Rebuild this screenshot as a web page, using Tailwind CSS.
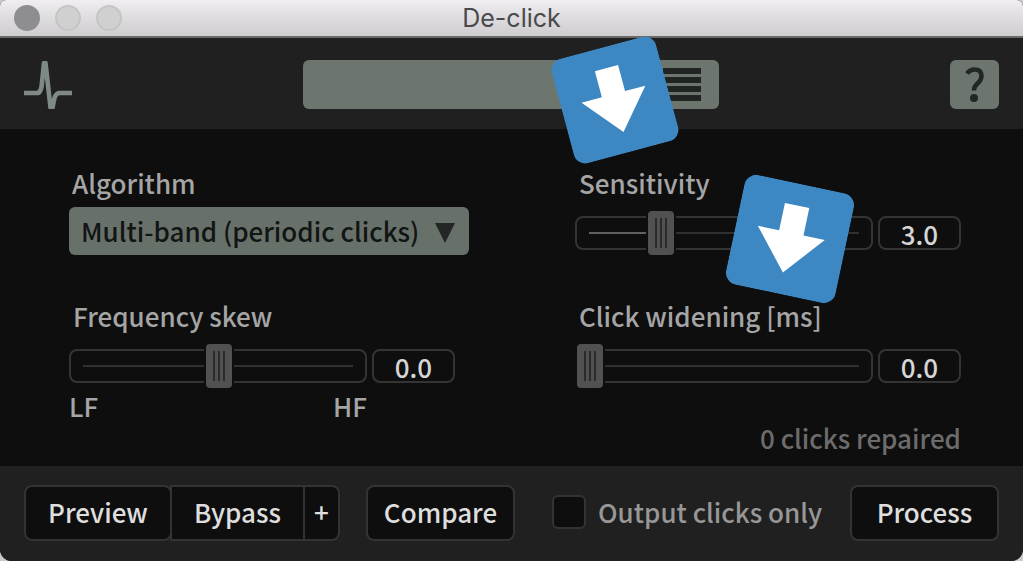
<!DOCTYPE html>
<html lang="en">
<head>
<meta charset="utf-8">
<meta name="viewport" content="width=device-width, initial-scale=1">
<title>De-click</title>
<script src="https://cdn.jsdelivr.net/npm/@tailwindcss/browser@4"></script>
</head>
<body class="min-h-screen bg-[#c9c9c9] font-['Noto_Sans_CJK_SC','Noto_Sans',sans-serif] text-[26px] font-medium">
<div class="relative flex min-h-screen flex-col overflow-hidden rounded-t-md rounded-b-xl bg-[#0e0e0e] text-[#a5a5a5]">

  <!-- Title bar -->
  <div class="relative flex h-[38px] shrink-0 items-center justify-center border-b-2 border-[#6a6a6a] bg-linear-to-b from-[#f0eef0] via-[#dedcde] to-[#cfcdcf]">
    <div class="absolute left-3.5 flex gap-[15px]">
      <button aria-label="Close" class="size-[26px] rounded-full bg-[#8e8d92]"></button>
      <button aria-label="Minimize" class="size-[26px] rounded-full border-2 border-[#c5c5c5] bg-[#d0d0d0]"></button>
      <button aria-label="Zoom" class="size-[26px] rounded-full border-2 border-[#c5c5c5] bg-[#d0d0d0]"></button>
    </div>
    <h1 class="font-[Inter,sans-serif] text-[25px] leading-9 font-normal text-[#4a494b]">De-click</h1>
  </div>

  <!-- Preset bar -->
  <header class="flex h-[91px] shrink-0 items-center justify-between bg-[#202020] px-6 pt-0.5">
    <svg class="h-12 w-12" viewBox="0 0 48 48" fill="none" stroke="#7f8a84" stroke-width="4.6" stroke-linejoin="round" aria-hidden="true"><path d="M0 32H14Q16.500 31 17.500 26L20 2H21.500L26.500 46.500H28.500L30 39Q31 33 35 32H48"/></svg>
    <div class="flex h-[49px] w-[416px] items-center justify-between rounded-md bg-[#6d756f] pr-[18px]">
      <input type="text" aria-label="Preset" class="h-full w-80 bg-transparent px-3 text-[#0e0e0e] outline-none">
      <button aria-label="Preset menu" class="flex w-[38px] flex-col gap-[3px]">
        <span class="h-1.5 w-full bg-[#202422]"></span>
        <span class="h-1.5 w-full bg-[#202422]"></span>
        <span class="h-1.5 w-full bg-[#202422]"></span>
        <span class="h-1.5 w-full bg-[#202422]"></span>
      </button>
    </div>
    <button aria-label="Help" class="flex size-[49px] items-center justify-center rounded-md bg-[#6d756f] text-[#222624]">
      <svg class="h-9 w-5" viewBox="0 0 20 36" fill="none" aria-hidden="true"><path d="M2 6.500Q5 2.500 9.500 2.500Q16.500 2.500 16.500 9Q16.500 13 12.500 16.500Q9 19.500 9 23.500" stroke="currentColor" stroke-width="4.500"/><circle cx="9" cy="31" r="4" fill="currentColor"/></svg>
    </button>
  </header>

  <!-- Parameters -->
  <main class="grid flex-1 grid-cols-2 content-start gap-x-[120px] gap-y-[37px] pt-9 pr-[62px] pb-3 pl-[69px]">
    <section>
      <label for="algorithm" class="mb-1 block h-9 pl-[3px] leading-9">Algorithm</label>
      <div class="-mr-3.5 flex h-14 items-center pb-1">
        <div class="relative w-full">
          <select id="algorithm" class="block h-12 w-full appearance-none rounded-md bg-[#68706a] pl-3 leading-[48px] text-[#111513] outline-none"><option>Multi-band (periodic clicks)</option></select>
          <svg class="pointer-events-none absolute top-4 right-3.5 h-5 w-5" viewBox="0 0 20 20" fill="#222624" aria-hidden="true"><path d="M0 0H20L10 20Z"/></svg>
        </div>
      </div>
    </section>

    <section>
      <label for="sensitivity" class="mb-1 block h-9 pl-1 leading-9">Sensitivity</label>
      <div class="flex h-14 items-center gap-[5px]">
        <div class="relative flex h-[34px] flex-1 items-center rounded-lg border-2 border-[#343434]">
          <div class="absolute inset-x-3 h-0.5 bg-[#303030]"></div>
          <div class="absolute left-3 h-0.5 w-[60px] bg-[#606060]"></div>
          <input id="sensitivity" type="range" min="0" max="100" step="0.1" value="26.5" aria-valuetext="3.0" class="relative -my-2 h-11 w-full appearance-none bg-transparent [&::-webkit-slider-thumb]:h-11 [&::-webkit-slider-thumb]:w-[26px] [&::-webkit-slider-thumb]:appearance-none [&::-webkit-slider-thumb]:rounded-[4px] [&::-webkit-slider-thumb]:bg-[#515151] [&::-webkit-slider-thumb]:bg-[repeating-linear-gradient(90deg,#2b2b2b_0_2px,#515151_2px_5px)] [&::-webkit-slider-thumb]:bg-[length:12px_30px] [&::-webkit-slider-thumb]:bg-center [&::-webkit-slider-thumb]:bg-no-repeat [&::-webkit-slider-thumb]:shadow-[0_0_0_2px_#0e0e0e]">
        </div>
        <input type="text" value="3.0" aria-label="Sensitivity value" class="h-[34px] w-[83px] rounded-lg border-2 border-[#343434] bg-transparent text-center leading-[30px] text-[#d6d6d6] outline-none">
      </div>
    </section>

    <section>
      <label for="skew" class="mb-1 block h-9 pl-1 leading-9">Frequency skew</label>
      <div class="flex h-14 items-center gap-[5px]">
        <div class="relative flex h-[34px] flex-1 items-center rounded-lg border-2 border-[#343434]">
          <div class="absolute inset-x-3 h-0.5 bg-[#303030]"></div>
          <input id="skew" type="range" min="-100" max="100" value="1" aria-valuetext="0.0" class="relative -my-2 h-11 w-full appearance-none bg-transparent [&::-webkit-slider-thumb]:h-11 [&::-webkit-slider-thumb]:w-[26px] [&::-webkit-slider-thumb]:appearance-none [&::-webkit-slider-thumb]:rounded-[4px] [&::-webkit-slider-thumb]:bg-[#515151] [&::-webkit-slider-thumb]:bg-[repeating-linear-gradient(90deg,#2b2b2b_0_2px,#515151_2px_5px)] [&::-webkit-slider-thumb]:bg-[length:12px_30px] [&::-webkit-slider-thumb]:bg-center [&::-webkit-slider-thumb]:bg-no-repeat [&::-webkit-slider-thumb]:shadow-[0_0_0_2px_#0e0e0e]">
        </div>
        <input type="text" value="0.0" aria-label="Frequency skew value" class="h-[34px] w-[83px] rounded-lg border-2 border-[#343434] bg-transparent text-center leading-[30px] text-[#d6d6d6] outline-none">
      </div>
      <div class="mr-[88px] flex justify-between leading-6"><span>LF</span><span>HF</span></div>
    </section>

    <section>
      <label for="widening" class="mb-1 block h-9 pl-1 leading-9">Click widening [ms]</label>
      <div class="flex h-14 items-center gap-[5px]">
        <div class="relative flex h-[34px] flex-1 items-center rounded-lg border-2 border-[#343434]">
          <div class="absolute inset-x-3 h-0.5 bg-[#303030]"></div>
          <input id="widening" type="range" min="0" max="100" value="0" aria-valuetext="0.0" class="relative -my-2 h-11 w-full appearance-none bg-transparent [&::-webkit-slider-thumb]:h-11 [&::-webkit-slider-thumb]:w-[26px] [&::-webkit-slider-thumb]:appearance-none [&::-webkit-slider-thumb]:rounded-[4px] [&::-webkit-slider-thumb]:bg-[#515151] [&::-webkit-slider-thumb]:bg-[repeating-linear-gradient(90deg,#2b2b2b_0_2px,#515151_2px_5px)] [&::-webkit-slider-thumb]:bg-[length:12px_30px] [&::-webkit-slider-thumb]:bg-center [&::-webkit-slider-thumb]:bg-no-repeat [&::-webkit-slider-thumb]:shadow-[0_0_0_2px_#0e0e0e]">
        </div>
        <input type="text" value="0.0" aria-label="Click widening value" class="h-[34px] w-[83px] rounded-lg border-2 border-[#343434] bg-transparent text-center leading-[30px] text-[#d6d6d6] outline-none">
      </div>
      <p class="mt-8 text-right leading-6 text-[#6c6c6c]">0 clicks repaired</p>
    </section>
  </main>

  <!-- Actions -->
  <footer class="flex h-[95px] shrink-0 items-center bg-[#202020] px-6 pb-0.5 text-[#dedede]">
    <div class="flex">
      <button class="h-14 w-[148px] rounded-lg border-2 border-[#333333] bg-[#0e0e0e] pb-0.5">Preview</button>
      <button class="-ml-0.5 h-14 w-[135px] border-2 border-[#333333] bg-[#0e0e0e] pb-0.5">Bypass</button>
      <button aria-label="Bypass options" class="-ml-0.5 h-14 w-[37px] rounded-r-lg border-2 border-[#333333] bg-[#0e0e0e] pb-0.5">+</button>
    </div>
    <button class="ml-[26px] h-14 w-[149px] rounded-lg border-2 border-[#333333] bg-[#0e0e0e] pb-0.5">Compare</button>
    <label class="ml-[37px] flex items-center gap-3 pb-0.5 text-[#979797]">
      <input type="checkbox" class="size-[34px] appearance-none rounded-md border-2 border-[#333333] bg-[#0e0e0e]">
      Output clicks only
    </label>
    <button class="ml-auto h-14 w-[149px] rounded-lg border-2 border-[#333333] bg-[#0e0e0e] pb-0.5">Process</button>
  </footer>

  <!-- Callout arrows -->
  <svg class="absolute top-[46px] left-[561px] size-[108px] -rotate-15" viewBox="-54 -54 108 108" role="img" aria-label="Arrow pointing down"><rect x="-54" y="-54" width="108" height="108" rx="12" fill="#3d88c3"/><path d="M-12-33H12V-6H33L0 33L-33-6H-12Z" fill="#fff"/></svg>
  <svg class="absolute top-[183px] left-[734px] size-[112px] rotate-12" viewBox="-54 -54 108 108" role="img" aria-label="Arrow pointing down"><rect x="-54" y="-54" width="108" height="108" rx="12" fill="#3d88c3"/><path d="M-12-33H12V-6H33L0 33L-33-6H-12Z" fill="#fff"/></svg>
</div>
</body>
</html>
